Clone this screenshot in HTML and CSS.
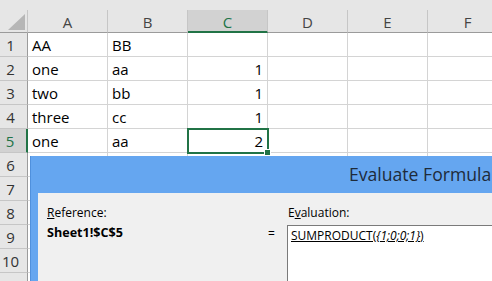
FILE: index.html
```html
<!DOCTYPE html>
<html lang="en">
<head>
    <meta charset="UTF-8">
    <title>Evaluate Formula</title>
    <link rel="stylesheet" href="styles.css">
</head>
<body>

    <div class="topstrip"></div>

    <div class="sheet">
        <div class="corner">
            <svg width="28" height="23" viewBox="0 0 28 23"><polygon points="8,20 25,4 25,20" fill="#b6b6b6"/></svg>
        </div>
        <div class="colhead">A</div>
        <div class="colhead">B</div>
        <div class="colhead active">C</div>
        <div class="colhead">D</div>
        <div class="colhead">E</div>
        <div class="colhead">F</div>

        <div class="rowhead">1</div>
        <div class="cell">AA</div><div class="cell">BB</div><div class="cell"></div><div class="cell"></div><div class="cell"></div><div class="cell"></div>

        <div class="rowhead">2</div>
        <div class="cell">one</div><div class="cell">aa</div><div class="cell num">1</div><div class="cell"></div><div class="cell"></div><div class="cell"></div>

        <div class="rowhead">3</div>
        <div class="cell">two</div><div class="cell">bb</div><div class="cell num">1</div><div class="cell"></div><div class="cell"></div><div class="cell"></div>

        <div class="rowhead">4</div>
        <div class="cell">three</div><div class="cell">cc</div><div class="cell num">1</div><div class="cell"></div><div class="cell"></div><div class="cell"></div>

        <div class="rowhead active">5</div>
        <div class="cell">one</div><div class="cell">aa</div><div class="cell num selected">2</div><div class="cell"></div><div class="cell"></div><div class="cell"></div>

        <div class="rowhead">6</div>
        <div class="cell"></div><div class="cell"></div><div class="cell"></div><div class="cell"></div><div class="cell"></div><div class="cell"></div>
        <div class="rowhead">7</div>
        <div class="cell"></div><div class="cell"></div><div class="cell"></div><div class="cell"></div><div class="cell"></div><div class="cell"></div>
        <div class="rowhead">8</div>
        <div class="cell"></div><div class="cell"></div><div class="cell"></div><div class="cell"></div><div class="cell"></div><div class="cell"></div>
        <div class="rowhead">9</div>
        <div class="cell"></div><div class="cell"></div><div class="cell"></div><div class="cell"></div><div class="cell"></div><div class="cell"></div>
        <div class="rowhead">10</div>
        <div class="cell"></div><div class="cell"></div><div class="cell"></div><div class="cell"></div><div class="cell"></div><div class="cell"></div>
        <div class="rowhead">11</div>
        <div class="cell"></div><div class="cell"></div><div class="cell"></div><div class="cell"></div><div class="cell"></div><div class="cell"></div>
    </div>

    <div class="dialog">
        <div class="titlebar">Evaluate Formula</div>
        <div class="client">
            <div class="label"><u>R</u>eference:</div>
            <div></div>
            <div class="label eval-label">E<u>v</u>aluation:</div>

            <div class="ref">Sheet1!$C$5</div>
            <div class="equals">=</div>
            <div class="evalbox"><u>SUMPRODUCT(<i>{1;0;0;1}</i>)</u></div>
        </div>
    </div>

</body>
</html>
```

FILE: styles.css
```css
body {
    margin: 0;
    width: 492px;
    height: 281px;
    overflow: hidden;
    position: relative;
    background-color: #fff;
    font-family: "Open Sans", "Noto Sans", sans-serif;
}

.topstrip {
    height: 10px;
    background-color: #e6e6e6;
}

.sheet {
    display: grid;
    grid-template-columns: 28px repeat(6, 80px);
    grid-template-rows: 23px repeat(11, 24px);
    width: 528px;
}

.sheet > div {
    box-sizing: border-box;
}

.corner {
    background-color: #e6e6e6;
    border-right: 1px solid #c6c6c6;
    border-bottom: 1px solid #9b9b9b;
}

.corner svg {
    display: block;
}

.colhead {
    background-color: #e6e6e6;
    border-right: 1px solid #c6c6c6;
    border-bottom: 1px solid #9b9b9b;
    color: #444;
    font-size: 15px;
    line-height: 22px;
    padding-top: 1px;
    text-align: center;
}

.colhead.active {
    background-color: #d2d2d2;
    color: #217346;
    border-bottom: 2px solid #217346;
}

.rowhead {
    background-color: #e6e6e6;
    border-right: 1px solid #9b9b9b;
    border-bottom: 1px solid #c6c6c6;
    color: #333;
    font-size: 15px;
    line-height: 23px;
    padding-top: 1px;
    text-align: center;
    padding-right: 6px;
}

.rowhead.active {
    background-color: #d2d2d2;
    color: #217346;
    border-right: 2px solid #217346;
}

.cell {
    border-right: 1px solid #d4d4d4;
    border-bottom: 1px solid #d4d4d4;
    color: #000;
    font-size: 15px;
    line-height: 23px;
    padding: 1px 4px 0;
    white-space: nowrap;
}

.cell.num {
    text-align: right;
}

.cell.selected {
    position: relative;
    outline: 2px solid #217346;
    outline-offset: -1px;
}

.cell.selected::after {
    content: "";
    position: absolute;
    right: -4px;
    bottom: -4px;
    width: 5px;
    height: 5px;
    background-color: #217346;
    border: 1px solid #fff;
}

.dialog {
    position: absolute;
    left: 30px;
    top: 156px;
    width: 520px;
    height: 160px;
    background-color: #65a6f0;
    border-left: 1px solid #4f90dd;
    box-sizing: border-box;
}

.titlebar {
    height: 37px;
    line-height: 37px;
    padding-left: 318px;
    font-size: 17.6px;
    color: #1e2b3a;
    white-space: nowrap;
}

.client {
    margin-left: 7px;
    height: 123px;
    background-color: #f0f0f0;
    padding: 12px 0 0 9px;
    box-sizing: border-box;
    display: grid;
    grid-template-columns: 216px 24px 1fr;
    grid-template-rows: 16px 1fr;
    row-gap: 4px;
    font-size: 12px;
    color: #000;
}

.label {
    line-height: 16px;
}

.eval-label {
    padding-left: 1px;
}

.ref {
    font-weight: bold;
    font-size: 12.6px;
    line-height: 16px;
}

.equals {
    line-height: 18px;
    padding-left: 5px;
}

.evalbox {
    background-color: #fff;
    border: 1px solid #7a7a7a;
    border-right: none;
    border-bottom: none;
    padding: 2px 3px;
    line-height: 16px;
    white-space: nowrap;
}
```
